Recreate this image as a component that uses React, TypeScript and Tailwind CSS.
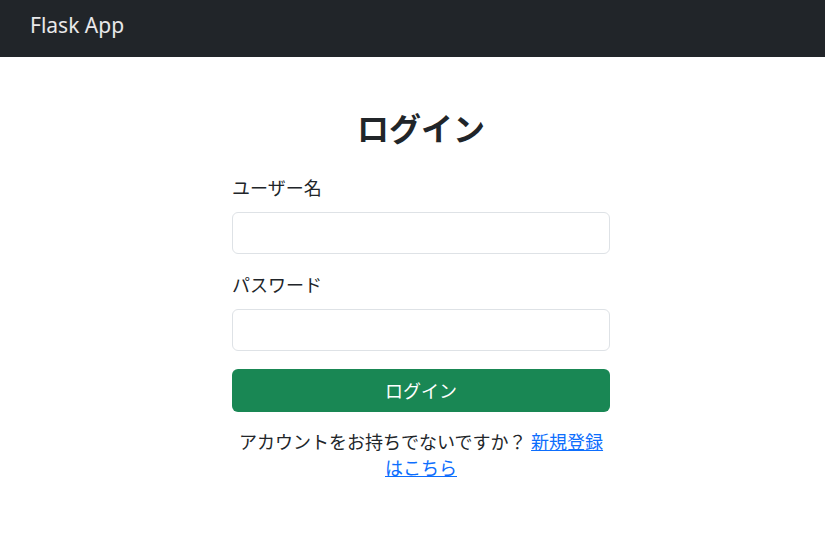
import React from "react";

export default function App() {
  const font = { fontFamily: '"Noto Sans", "Noto Sans CJK JP", sans-serif' };
  return (
    <div className="min-h-[535px] bg-white text-[#212529]" style={font}>
      <nav className="h-[57px] bg-[#212529] px-[30px] pt-[10px]">
        <span className="text-[21px] leading-[30px] text-white/90">Flask App</span>
      </nav>
      <main className="flex justify-center pl-[17px] pt-[53px]">
        <div className="w-[378px]">
          <h2 className="mb-[26px] text-center text-[32px] font-bold leading-[38px]">ログイン</h2>
          <form onSubmit={(e) => e.preventDefault()}>
            <div className="mb-[17px]">
              <label className="mb-[10px] block text-[18px] leading-[28px]">ユーザー名</label>
              <input type="text" className="block h-[42px] w-full rounded-[6px] border border-[#dee2e6] bg-white px-3 outline-none" />
            </div>
            <div className="mb-[18px]">
              <label className="mb-[10px] block text-[18px] leading-[28px]">パスワード</label>
              <input type="password" className="block h-[42px] w-full rounded-[6px] border border-[#dee2e6] bg-white px-3 outline-none" />
            </div>
            <button type="submit" className="block h-[43px] w-full rounded-[6px] bg-[#198754] text-[18px] leading-[26px] text-white">
              ログイン
            </button>
          </form>
          <p className="mt-[17px] text-center text-[18px] leading-[26px]">
            アカウントをお持ちでないですか？ <a href="#" className="text-[#0d6efd] underline">新規登録はこちら</a>
          </p>
        </div>
      </main>
    </div>
  );
}
